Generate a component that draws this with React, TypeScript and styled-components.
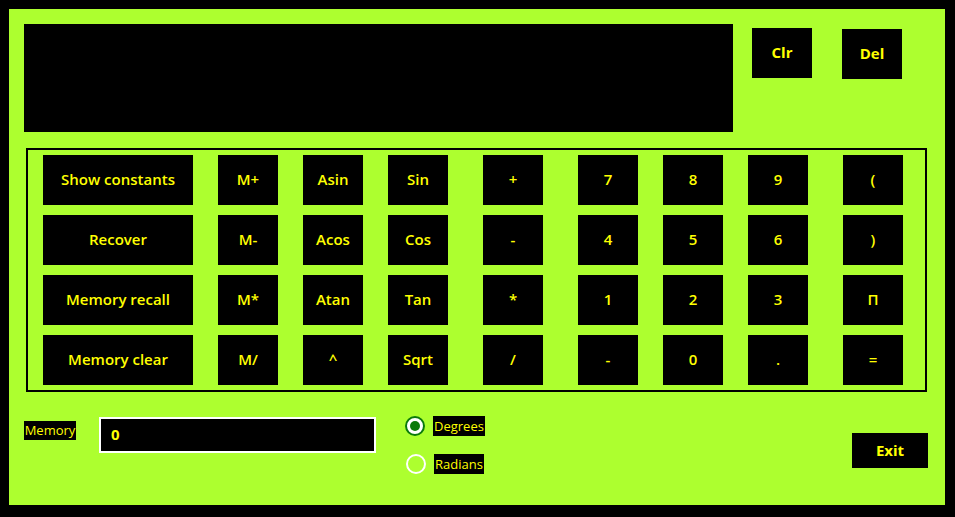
import React from "react";
import styled, { createGlobalStyle } from "styled-components";

const GlobalStyle = createGlobalStyle`
  html, body {
    margin: 0;
    padding: 0;
    background: #000000;
  }
  body {
    font-family: "Open Sans", "Noto Sans", sans-serif;
  }
`;

const keys: { label: string; wide?: boolean }[][] = [
  [{ label: "Show constants", wide: true }, { label: "M+" }, { label: "Asin" }, { label: "Sin" }, { label: "+" }, { label: "7" }, { label: "8" }, { label: "9" }, { label: "(" }],
  [{ label: "Recover", wide: true }, { label: "M-" }, { label: "Acos" }, { label: "Cos" }, { label: "-" }, { label: "4" }, { label: "5" }, { label: "6" }, { label: ")" }],
  [{ label: "Memory recall", wide: true }, { label: "M*" }, { label: "Atan" }, { label: "Tan" }, { label: "*" }, { label: "1" }, { label: "2" }, { label: "3" }, { label: "Π" }],
  [{ label: "Memory clear", wide: true }, { label: "M/" }, { label: "^" }, { label: "Sqrt" }, { label: "/" }, { label: "-" }, { label: "0" }, { label: "." }, { label: "=" }],
];

export default function App() {
  return (
    <>
      <GlobalStyle />
      <Window>
        <TopRow>
          <Display />
          <TopButton $top={4} $left={19}>Clr</TopButton>
          <TopButton $top={5} $left={30}>Del</TopButton>
        </TopRow>
        <Keypad>
          {keys.flat().map((k, i) => (
            <KeyCell key={i}>
              <Key $wide={k.wide}>{k.label}</Key>
            </KeyCell>
          ))}
        </Keypad>
        <BottomRow>
          <MemoryLabel>Memory</MemoryLabel>
          <MemoryBox>0</MemoryBox>
          <RadioGroup>
            <RadioRow>
              <Radio $checked />
              <RadioLabel>Degrees</RadioLabel>
            </RadioRow>
            <RadioRow $shift={1}>
              <Radio />
              <RadioLabel>Radians</RadioLabel>
            </RadioRow>
          </RadioGroup>
          <ExitButton>Exit</ExitButton>
        </BottomRow>
      </Window>
    </>
  );
}

const Window = styled.div`
  box-sizing: border-box;
  width: 955px;
  height: 517px;
  border-style: solid;
  border-color: #000000;
  border-width: 9px 10px 12px 9px;
  background: #adff2f;
  padding: 15px 15px 0 15px;
  display: flex;
  flex-direction: column;
`;

const TopRow = styled.div`
  display: flex;
  align-items: flex-start;
`;

const Display = styled.div`
  width: 709px;
  height: 108px;
  background: #000000;
`;

const TopButton = styled.div<{ $top: number; $left: number }>`
  box-sizing: border-box;
  width: 60px;
  height: 50px;
  padding-bottom: 2px;
  margin-top: ${(p) => p.$top}px;
  margin-left: ${(p) => p.$left}px;
  background: #000000;
  color: #ffff00;
  font-weight: 700;
  font-size: 15px;
  display: flex;
  align-items: center;
  justify-content: center;
`;

const Keypad = styled.div`
  box-sizing: border-box;
  margin: 16px 0 0 2px;
  width: 901px;
  height: 244px;
  border: 2px solid #000000;
  padding: 5px 0 0 15px;
  display: grid;
  grid-template-columns: 150px 85px 85px 85px 95px 95px 85px 85px 95px;
  grid-auto-rows: 50px;
  row-gap: 10px;
`;

const KeyCell = styled.div`
  display: flex;
  justify-content: flex-end;
`;

const Key = styled.div<{ $wide?: boolean }>`
  box-sizing: border-box;
  width: ${(p) => (p.$wide ? "150px" : "60px")};
  height: 50px;
  padding-bottom: 2px;
  background: #000000;
  color: #ffff00;
  font-size: 15px;
  font-weight: 600;
  display: flex;
  align-items: center;
  justify-content: center;
`;

const BottomRow = styled.div`
  display: flex;
  align-items: flex-start;
  margin-top: 24px;
`;

const MemoryLabel = styled.div`
  box-sizing: border-box;
  width: 52px;
  margin-top: 5px;
  background: #000000;
  color: #ffff00;
  font-size: 13px;
  line-height: 19px;
  text-align: center;
  white-space: nowrap;
`;

const MemoryBox = styled.div`
  box-sizing: border-box;
  margin-left: 23px;
  margin-top: 1px;
  width: 277px;
  height: 36px;
  background: #000000;
  border: 2px solid #ffffff;
  color: #ffff00;
  font-weight: 700;
  font-size: 15px;
  padding: 0 0 3px 10px;
  display: flex;
  align-items: center;
`;

const RadioGroup = styled.div`
  margin-left: 29px;
  display: flex;
  flex-direction: column;
  gap: 18px;
`;

const RadioRow = styled.div<{ $shift?: number }>`
  display: flex;
  align-items: center;
  gap: 8px;
  height: 20px;
  padding-left: ${(p) => p.$shift ?? 0}px;
`;

const Radio = styled.div<{ $checked?: boolean }>`
  box-sizing: border-box;
  width: 20px;
  height: 20px;
  border-radius: 50%;
  border: 2px solid ${(p) => (p.$checked ? "#0b7a0b" : "#ffffff")};
  background: ${(p) => (p.$checked ? "#ffffff" : "transparent")};
  position: relative;
  &::after {
    content: "";
    display: ${(p) => (p.$checked ? "block" : "none")};
    position: absolute;
    left: 3px;
    top: 3px;
    width: 10px;
    height: 10px;
    border-radius: 50%;
    background: #0b7a0b;
  }
`;

const RadioLabel = styled.div`
  background: #000000;
  color: #ffff00;
  font-size: 13px;
  line-height: 20px;
  padding: 0 1px;
`;

const ExitButton = styled.div`
  box-sizing: border-box;
  margin-left: auto;
  margin-right: 2px;
  margin-top: 17px;
  width: 76px;
  height: 35px;
  padding-bottom: 2px;
  background: #000000;
  color: #ffff00;
  font-weight: 700;
  font-size: 15px;
  display: flex;
  align-items: center;
  justify-content: center;
`;
